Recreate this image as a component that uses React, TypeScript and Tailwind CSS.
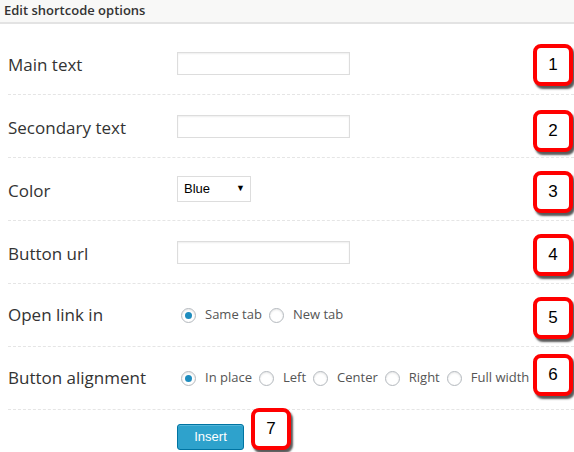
import React from "react"

const rowClass = "flex h-[63px] items-center border-b border-dashed border-[#e5e5e5]"
const labelClass = "w-[169px] shrink-0 text-[17px] text-[#333]"

function TextBox() {
  return <div className="h-[23px] w-[173px] border border-[#ddd] bg-white shadow-[inset_0_1px_2px_rgba(0,0,0,0.07)]" />
}

function Radio({ checked, label }: { checked?: boolean; label: string }) {
  return (
    <div className="mr-[7px] flex items-center">
      <span className="flex h-[15px] w-[15px] items-center justify-center rounded-full border border-[#b4b9be] bg-white shadow-[inset_0_1px_2px_rgba(0,0,0,0.1)]">
        {checked && <span className="h-[7px] w-[7px] rounded-full bg-[#1e8cbe]" />}
      </span>
      <span className="ml-[9px] text-[13px] text-[#555]">{label}</span>
    </div>
  )
}

function Badge({ n, className }: { n: number; className: string }) {
  return (
    <div
      className={`absolute flex h-[42px] w-[40px] items-center justify-center rounded-[8px] border-[4px] border-[#ff0000] bg-white shadow-[2px_3px_2px_rgba(0,0,0,0.65)] ${className}`}
    >
      <span className="font-['Liberation_Sans',sans-serif] text-[17px] text-black">{n}</span>
    </div>
  )
}

export default function App() {
  return (
    <div className="relative h-[452px] w-[574px] overflow-hidden bg-white font-['Open_Sans',sans-serif]">
      {/* Header */}
      <div className="flex h-[24px] items-center border-b-2 border-[#e3e3e3] bg-[#f8f8f7] pl-[4px]">
        <span className="text-[13px] font-semibold text-[#333]">Edit shortcode options</span>
      </div>

      <div className="pl-[8px] pt-[8px]">
        <div className={rowClass}>
          <div className={`${labelClass} pt-[4px]`}>Main text</div>
          <TextBox />
        </div>
        <div className={rowClass}>
          <div className={`${labelClass} pt-[4px]`}>Secondary text</div>
          <TextBox />
        </div>
        <div className={rowClass}>
          <div className={`${labelClass} pt-[4px]`}>Color</div>
          <div className="flex h-[26px] w-[74px] items-center justify-between border border-[#ddd] bg-white pl-[6px] pr-[5px] font-['Liberation_Sans',sans-serif] text-[13px] text-black">
            <span>Blue</span>
            <span className="text-[9px]">▼</span>
          </div>
        </div>
        <div className={rowClass}>
          <div className={`${labelClass} pt-[4px]`}>Button url</div>
          <TextBox />
        </div>
        <div className={rowClass}>
          <div className={labelClass}>Open link in</div>
          <div className="flex items-center pl-[4px]">
            <Radio checked label="Same tab" />
            <Radio label="New tab" />
          </div>
        </div>
        <div className={rowClass}>
          <div className={labelClass}>Button alignment</div>
          <div className="flex items-center whitespace-nowrap pl-[4px]">
            <Radio checked label="In place" />
            <Radio label="Left" />
            <Radio label="Center" />
            <Radio label="Right" />
            <Radio label="Full width" />
          </div>
        </div>
        <div className="pl-[169px] pt-[13px]">
          <button className="h-[26px] w-[67px] rounded-[3px] border border-[#0074a2] bg-[#2ea2cc] font-['Liberation_Sans',sans-serif] text-[13px] text-white shadow-[inset_0_1px_0_rgba(120,200,230,0.5)]">
            Insert
          </button>
        </div>
      </div>

      <Badge n={1} className="left-[533px] top-[44px]" />
      <Badge n={2} className="left-[533px] top-[110px]" />
      <Badge n={3} className="left-[533px] top-[171px]" />
      <Badge n={4} className="left-[533px] top-[234px]" />
      <Badge n={5} className="left-[533px] top-[297px]" />
      <Badge n={6} className="left-[533px] top-[354px]" />
      <Badge n={7} className="left-[251px] top-[408px]" />
    </div>
  )
}
